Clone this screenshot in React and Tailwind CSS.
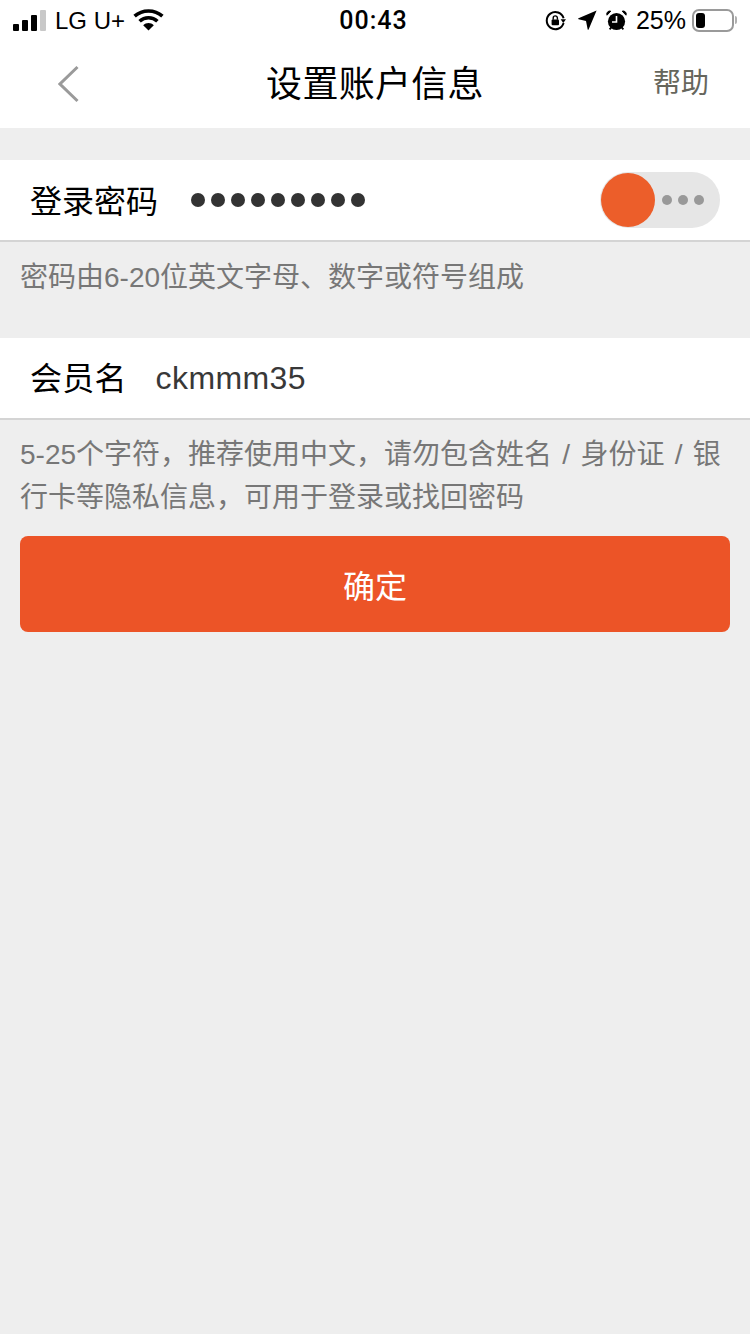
const FONT = 'font-["Liberation_Sans","Noto_Sans_CJK_SC",sans-serif]';

function StatusBar() {
  return (
    <div className="flex h-10 items-center justify-between pl-[13px] pr-[16px] text-black">
      <div className="flex w-[260px] items-center">
        <div className="flex h-[21px] items-end gap-[3px]">
          <span className="h-[7px] w-[6px] rounded-[1px] bg-black" />
          <span className="h-[11px] w-[6px] rounded-[1px] bg-black" />
          <span className="h-[16px] w-[6px] rounded-[1px] bg-black" />
          <span className="h-[21px] w-[6px] rounded-[1px] bg-[#c8c8c8]" />
        </div>
        <span className="ml-[9px] mt-[1px] text-[24px] leading-none">LG U+</span>
        <svg className="ml-[8px]" width="31" height="22" viewBox="0 0 31 22" fill="none" stroke="black" strokeWidth="3.6">
          <path d="M1.6 7.2C9.4 0.2 21.6 0.2 29.4 7.2" />
          <path d="M6.6 12.2C11.6 7.6 19.4 7.6 24.4 12.2" />
          <path d="M15.5 21.5L10.2 16.2C13.2 13.4 17.8 13.4 20.8 16.2Z" fill="black" stroke="none" />
        </svg>
      </div>
      <span className="font-['Roboto',sans-serif] text-[25px] font-medium leading-none tracking-[1px]">00:43</span>
      <div className="flex w-[260px] items-center justify-end">
        <svg width="21" height="21" viewBox="0 0 21 21" fill="none">
          <path d="M18.6 8.2A8.6 8.6 0 1 0 18.6 13" stroke="black" strokeWidth="2" />
          <path d="M15.6 9.2L21 9.2L18.3 13Z" fill="black" />
          <rect x="6.6" y="9.6" width="7.4" height="5.6" rx="1" fill="black" />
          <path d="M8.2 9.8V8A2.1 2.1 0 0 1 12.4 8V9.8" stroke="black" strokeWidth="1.4" />
        </svg>
        <svg className="ml-[12px]" width="19" height="20" viewBox="0 0 19 20">
          <path d="M18.6 0.6L10.6 19.6C10.3 20 9.8 19.9 9.7 19.4L8 11L0.6 9.3C0 9.1 0 8.6 0.5 8.3Z" fill="black" />
        </svg>
        <svg className="ml-[9px]" width="21" height="21" viewBox="0 0 21 21" fill="none">
          <circle cx="10.5" cy="11.5" r="8.6" fill="black" />
          <path d="M10.5 6V12H6" stroke="white" strokeWidth="1.6" />
          <path d="M1 5.2L4.8 1.2A3 3 0 0 0 1 5.2ZM20 5.2L16.2 1.2A3 3 0 0 1 20 5.2Z" fill="black" stroke="black" />
          <path d="M3.6 19.4L5.4 17.4M17.4 19.4L15.6 17.4" stroke="black" strokeWidth="1.8" />
        </svg>
        <span className="ml-[9px] text-[25px] leading-none">25%</span>
        <div className="relative ml-[6px] flex h-[23px] w-[42px] items-center rounded-[7px] border-2 border-[#9a9a9a] p-[2px]">
          <span className="h-[15px] w-[9px] rounded-[3px] bg-black" />
          <span className="absolute -right-[5px] top-[5px] h-[8px] w-[2px] rounded-r-full bg-[#b0b0b0]" />
        </div>
      </div>
    </div>
  );
}

function NavBar() {
  return (
    <div className="relative flex h-[88px] items-center justify-center">
      <svg className="absolute left-[58px] top-[25px]" width="22" height="38" viewBox="0 0 22 38" fill="none">
        <path d="M19.5 2L2 19L19.5 36" stroke="#9a9a9a" strokeWidth="3" />
      </svg>
      <span className="mt-[1px] text-[36px] leading-none tracking-[0.3px] text-black">设置账户信息</span>
      <span className="absolute right-[41px] top-[30px] text-[28px] leading-none text-[#66665c]">帮助</span>
    </div>
  );
}

function Toggle() {
  return (
    <div className="flex h-14 w-[120px] items-center rounded-full bg-[#e6e6e6]">
      <span className="ml-[1px] h-[54px] w-[54px] rounded-full bg-[#ec5e2a]" />
      <div className="ml-[7px] flex gap-[6px]">
        <span className="h-[10px] w-[10px] rounded-full bg-[#999999]" />
        <span className="h-[10px] w-[10px] rounded-full bg-[#999999]" />
        <span className="h-[10px] w-[10px] rounded-full bg-[#999999]" />
      </div>
    </div>
  );
}

export default function App() {
  const dots = [0, 1, 2, 3, 4, 5, 6, 7, 8];

  return (
    <div className={`min-h-[1334px] bg-[#eeeeee] ${FONT}`}>
      <div className="bg-white">
        <StatusBar />
        <NavBar />
      </div>

      <div className="mt-8 flex h-[82px] items-center justify-between border-b-2 border-[#d4d4d4] bg-white pl-[30px] pr-[30px]">
        <div className="flex items-center">
          <span className="mt-[3px] text-[32px] leading-none text-black">登录密码</span>
          <div className="ml-[33px] flex gap-[6px]">
            {dots.map((d) => (
              <span key={d} className="h-[14px] w-[14px] rounded-full bg-[#333333]" />
            ))}
          </div>
        </div>
        <Toggle />
      </div>
      <p className="h-[96px] px-5 pt-[15px] text-[28px] leading-[42px] text-[#777777]">
        密码由6-20位英文字母、数字或符号组成
      </p>

      <div className="flex h-[82px] items-center border-b-2 border-[#d4d4d4] bg-white pl-[30px]">
        <span className="mt-[2px] text-[32px] leading-none tracking-[0.2px] text-black">会员名</span>
        <span className="ml-[29px] text-[32px] leading-none tracking-[0.4px] text-[#383838]">ckmmm35</span>
      </div>
      <p className="px-5 pt-[13px] text-[28px] leading-[43px] text-[#777777] [word-spacing:2.5px]">
        5-25个字符，推荐使用中文，请勿包含姓名 / 身份证 / 银行卡等隐私信息，可用于登录或找回密码
      </p>

      <div className="mx-5 mt-[17px] flex h-24 items-center justify-center rounded-lg bg-[#ec5427] pt-[5px] text-[32px] text-white">
        确定
      </div>
    </div>
  );
}
